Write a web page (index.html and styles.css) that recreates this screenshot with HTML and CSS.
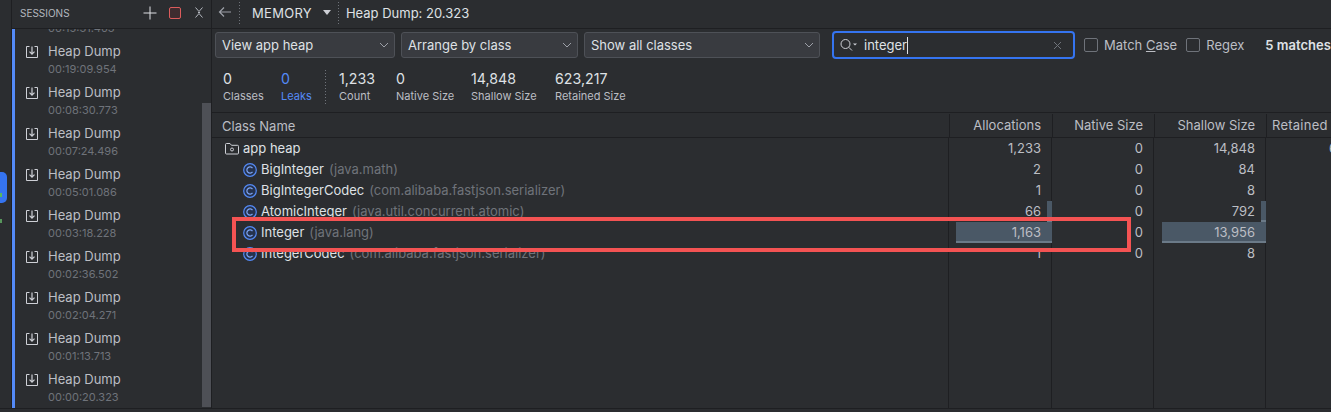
FILE: index.html
```html
<!DOCTYPE html>
<html lang="en">
<head>
<meta charset="utf-8">
<title>Memory profiler</title>
<link rel="stylesheet" href="styles.css">
</head>
<body>
<div class="app">
  <div class="rail"><div class="rail-btn"><span class="rail-dot"></span></div><span class="rail-dot2"></span></div>
  <aside class="sessions">
    <div class="s-head">
      <span class="s-title">SESSIONS</span>
      <svg class="s-ic s-plus" width="14" height="14" viewBox="0 0 14 14"><path d="M7 0.500v13M.5 7h13" stroke="#dfe1e5" fill="none"/></svg>
      <svg class="s-ic s-stop" width="14" height="14" viewBox="0 0 14 14"><rect x="1.500" y="1.500" width="11" height="11" rx="1.500" fill="#3e2c2f" stroke="#db5c5c"/></svg>
      <svg class="s-ic s-close" width="8" height="11" viewBox="0 0 8 11"><path d="M.5.500L4 4.500 7.500.500M.5 10.500L4 6.500l3.500 4M3 5.500h2" stroke="#b4b8bf" fill="none"/></svg>
    </div>
    <div class="s-body">
      <div class="s-list">
        <div class="s-item partial"><div class="s-time">00:15:31.403</div></div>
        <div class="s-item"><svg class="dl" width="12" height="12" viewBox="0 0 12 12"><use href="#dl"/></svg><div><div class="s-name">Heap Dump</div><div class="s-time">00:19:09.954</div></div></div>
        <div class="s-item"><svg class="dl" width="12" height="12" viewBox="0 0 12 12"><use href="#dl"/></svg><div><div class="s-name">Heap Dump</div><div class="s-time">00:08:30.773</div></div></div>
        <div class="s-item"><svg class="dl" width="12" height="12" viewBox="0 0 12 12"><use href="#dl"/></svg><div><div class="s-name">Heap Dump</div><div class="s-time">00:07:24.496</div></div></div>
        <div class="s-item"><svg class="dl" width="12" height="12" viewBox="0 0 12 12"><use href="#dl"/></svg><div><div class="s-name">Heap Dump</div><div class="s-time">00:05:01.086</div></div></div>
        <div class="s-item"><svg class="dl" width="12" height="12" viewBox="0 0 12 12"><use href="#dl"/></svg><div><div class="s-name">Heap Dump</div><div class="s-time">00:03:18.228</div></div></div>
        <div class="s-item"><svg class="dl" width="12" height="12" viewBox="0 0 12 12"><use href="#dl"/></svg><div><div class="s-name">Heap Dump</div><div class="s-time">00:02:36.502</div></div></div>
        <div class="s-item"><svg class="dl" width="12" height="12" viewBox="0 0 12 12"><use href="#dl"/></svg><div><div class="s-name">Heap Dump</div><div class="s-time">00:02:04.271</div></div></div>
        <div class="s-item"><svg class="dl" width="12" height="12" viewBox="0 0 12 12"><use href="#dl"/></svg><div><div class="s-name">Heap Dump</div><div class="s-time">00:01:13.713</div></div></div>
        <div class="s-item"><svg class="dl" width="12" height="12" viewBox="0 0 12 12"><use href="#dl"/></svg><div><div class="s-name">Heap Dump</div><div class="s-time">00:00:20.323</div></div></div>
      </div>
      <div class="s-scroll"><div class="s-thumb"></div></div>
    </div>
  </aside>
  <main class="main">
    <div class="topbar">
      <svg class="back" width="14" height="12" viewBox="0 0 14 12"><path d="M13 6H1.500M6 1.500L1.500 6 6 10.500" stroke="#9da0a8" fill="none" stroke-width="1.200"/></svg>
      <span class="vdots"></span>
      <span class="mem">MEMORY</span>
      <span class="tri"></span>
      <span class="vdots"></span>
      <span class="dump">Heap Dump: 20.323</span>
    </div>
    <div class="filters">
      <div class="combo c1"><span>View app heap</span><svg width="10" height="6" viewBox="0 0 10 6"><path d="M1 1l4 4 4-4" stroke="#9da0a8" fill="none"/></svg></div>
      <div class="combo c2"><span>Arrange by class</span><svg width="10" height="6" viewBox="0 0 10 6"><path d="M1 1l4 4 4-4" stroke="#9da0a8" fill="none"/></svg></div>
      <div class="combo c3"><span>Show all classes</span><svg width="10" height="6" viewBox="0 0 10 6"><path d="M1 1l4 4 4-4" stroke="#9da0a8" fill="none"/></svg></div>
      <div class="search">
        <svg class="mag" width="18" height="14" viewBox="0 0 18 14"><circle cx="5.500" cy="6" r="4.500" stroke="#ced0d6" fill="none"/><path d="M8.800 9.300L12 12.500" stroke="#ced0d6" fill="none"/><path d="M13 5.500h4l-2 2z" fill="#ced0d6"/></svg>
        <span class="q">integer</span><span class="caret"></span>
        <svg class="clr" width="9" height="9" viewBox="0 0 9 9"><path d="M1 1l7 7M8 1L1 8" stroke="#6f737a" fill="none"/></svg>
      </div>
      <label class="chk"><span class="box"></span><span>Match <u>C</u>ase</span></label>
      <label class="chk"><span class="box"></span><span>Re<u>g</u>ex</span></label>
      <span class="matches">5 matches</span>
    </div>
    <div class="stats">
      <div class="stat st-c"><b>0</b><span>Classes</span></div>
      <div class="stat st-l"><b>0</b><span>Leaks</span></div>
      <span class="vdots short"></span>
      <div class="stat st-n"><b>1,233</b><span>Count</span></div>
      <div class="stat st-ns"><b>0</b><span>Native Size</span></div>
      <div class="stat st-s"><b>14,848</b><span>Shallow Size</span></div>
      <div class="stat st-r"><b>623,217</b><span>Retained Size</span></div>
    </div>
    <div class="table">
      <div class="row head">
        <div class="cell name">Class Name</div><div class="cell num">Allocations</div><div class="cell num">Native Size</div><div class="cell num">Shallow Size</div><div class="cell num ret">Retained Size</div>
      </div>
      <div class="tbody">
        <div class="row">
          <div class="cell name root"><svg width="14" height="12" viewBox="0 0 14 12"><path d="M.5 10V1.500a1 1 0 0 1 1-1h3.500l1.500 1.800h6a1 1 0 0 1 1 1V10a1 1 0 0 1-1 1h-11a1 1 0 0 1-1-1z" stroke="#ced0d6" fill="none"/><circle cx="7" cy="6.500" r="1.500" stroke="#ced0d6" fill="none"/></svg><span class="cn">app heap</span></div>
          <div class="cell num">1,233</div><div class="cell num">0</div><div class="cell num">14,848</div><div class="cell num ret">623,217</div>
        </div>
        <div class="row">
          <div class="cell name"><svg class="cls" width="14" height="14" viewBox="0 0 14 14"><use href="#cls"/></svg><span class="cn">BigInteger</span><span class="pk">(java.math)</span></div>
          <div class="cell num">2</div><div class="cell num">0</div><div class="cell num">84</div><div class="cell num ret"></div>
        </div>
        <div class="row">
          <div class="cell name"><svg class="cls" width="14" height="14" viewBox="0 0 14 14"><use href="#cls"/></svg><span class="cn">BigIntegerCodec</span><span class="pk">(com.alibaba.fastjson.serializer)</span></div>
          <div class="cell num">1</div><div class="cell num">0</div><div class="cell num">8</div><div class="cell num ret"></div>
        </div>
        <div class="row">
          <div class="cell name"><svg class="cls" width="14" height="14" viewBox="0 0 14 14"><use href="#cls"/></svg><span class="cn">AtomicInteger</span><span class="pk">(java.util.concurrent.atomic)</span></div>
          <div class="cell num bar"><i class="fill" style="width:4.800%"></i><span>66</span></div><div class="cell num">0</div><div class="cell num bar"><i class="fill" style="width:4.500%"></i><span>792</span></div><div class="cell num ret"></div>
        </div>
        <div class="row">
          <div class="cell name"><svg class="cls" width="14" height="14" viewBox="0 0 14 14"><use href="#cls"/></svg><span class="cn">Integer</span><span class="pk">(java.lang)</span></div>
          <div class="cell num bar"><i class="fill" style="width:92.300%"></i><span>1,163</span></div><div class="cell num">0</div><div class="cell num bar"><i class="fill" style="width:92.900%"></i><span>13,956</span></div><div class="cell num ret"></div>
        </div>
        <div class="row">
          <div class="cell name"><svg class="cls" width="14" height="14" viewBox="0 0 14 14"><use href="#cls"/></svg><span class="cn">IntegerCodec</span><span class="pk">(com.alibaba.fastjson.serializer)</span></div>
          <div class="cell num">1</div><div class="cell num">0</div><div class="cell num">8</div><div class="cell num ret"></div>
        </div>
        <div class="redbox"></div>
      </div>
    </div>
  </main>
</div>
<svg class="defs" width="0" height="0">
  <defs>
    <g id="dl"><path d="M3.500.500H.5v11h11V.500H8.500" stroke="#ced0d6" fill="none"/><path d="M6 .5v7.500M3.500 5.700L6 8.200l2.500-2.500" stroke="#ced0d6" fill="none" stroke-width="1.200"/></g>
    <g id="cls"><circle cx="7" cy="7" r="6.300" stroke="#548af7" fill="#25324d" stroke-width="1.200"/><path d="M9.500 5.200A3.100 3.100 0 1 0 9.500 8.800" stroke="#7fa6f5" fill="none" stroke-width="1.200"/></g>
  </defs>
</svg>
</body>
</html>
```
FILE: styles.css
```css
* { box-sizing: border-box; }
html, body { margin: 0; padding: 0; height: 100%; overflow: hidden; }
body { background: #2b2d30; color: #dfe1e5; font: 13px/16px Inter, "Noto Sans", sans-serif; }
.app { display: flex; width: 1331px; height: 409px; border-bottom: 1px solid #1e1f22; }
.rail { width: 12px; flex: none; background: #2b2d30; border-right: 1px solid #1e1f22; padding-top: 172px; }
.rail-btn { width: 7px; height: 31px; background: #3574f0; border-radius: 0 5px 5px 0; position: relative; }
.rail-dot { position: absolute; left: 0; bottom: 6px; width: 2px; height: 4px; background: #57b85c; }
.rail-dot2 { display: block; width: 2px; height: 4px; margin-top: 16px; background: #57965c; }
.sessions { width: 200px; flex: none; border-right: 1px solid #1e1f22; display: flex; flex-direction: column; }
.s-head { height: 29px; flex: none; display: flex; align-items: center; padding-left: 8px; border-bottom: 1px solid #1e1f22; }
.s-title { font-size: 10px; color: #b4b8bf; flex: 1; margin-bottom: 2px; }
.s-ic { flex: none; margin-bottom: 3px; }
.s-plus { margin-right: 11px; }
.s-stop { margin-right: 13px; }
.s-close { margin-right: 8px; }
.s-body { flex: 1; display: flex; min-height: 0; }
.s-list { width: 190px; flex: none; border-left: 3px solid #548af7; display: flex; flex-direction: column; justify-content: flex-end; overflow: hidden; padding-bottom: 2px; }
.s-item { height: 41px; flex: none; display: flex; padding: 5px 0 0 11px; gap: 10px; }
.s-item.partial { padding-left: 33px; padding-top: 23px; }
.dl { margin-top: 4px; flex: none; }
.s-name { color: #bcbec4; font-size: 13px; line-height: 18px; }
.s-time { color: #6f737a; font-size: 11px; line-height: 18px; }
.s-scroll { width: 9px; flex: none; display: flex; flex-direction: column; justify-content: flex-end; }
.s-thumb { height: 304px; background: #4e5056; margin-bottom: 1px; }
.main { flex: 1; min-width: 0; display: flex; flex-direction: column; overflow: hidden; }
.topbar { height: 29px; flex: none; display: flex; align-items: center; border-bottom: 1px solid #1e1f22; padding-bottom: 3px; }
.back { margin-left: 6px; flex: none; margin-bottom: 1px; }
.vdots { display: block; width: 1px; height: 22px; flex: none; background: repeating-linear-gradient(to bottom, #6f737a 0 1px, transparent 1px 3px); }
.topbar .vdots:nth-of-type(1) { margin-left: 7px; }
.mem { margin-left: 12px; color: #dfe1e5; letter-spacing: .3px; }
.tri { margin: 0 7px 0 11px; width: 0; height: 0; border: 4px solid transparent; border-top: 5px solid #ced0d6; border-bottom: 0; }
.dump { margin-left: 7px; color: #dfe1e5; }
.filters { height: 32px; flex: none; display: flex; align-items: center; padding-left: 3px; }
.combo { height: 26px; flex: none; display: flex; align-items: center; justify-content: space-between; padding: 0 5px 0 6px; background: #393b40; border: 1px solid #4e5157; border-radius: 3px; color: #dfe1e5; }
.c1 { width: 180px; margin-right: 6px; }
.c2 { width: 177px; margin-right: 6px; }
.c3 { width: 236px; margin-right: 12px; }
.search { width: 243px; height: 28px; flex: none; display: flex; align-items: center; border: 2px solid #3574f0; border-radius: 4px; padding-left: 6px; margin-right: 9px; }
.mag { flex: none; margin-right: 6px; }
.q { color: #dfe1e5; }
.caret { width: 1px; height: 17px; background: #dfe1e5; }
.clr { margin-left: auto; margin-right: 11px; }
.chk { display: flex; align-items: center; gap: 6px; margin-right: 9px; color: #bcbec4; }
.chk + .chk { margin-right: 9px; }
.box { width: 14px; height: 14px; border: 1px solid #6f737a; border-radius: 2px; }
.matches { margin-left: 12px; font-weight: 600; color: #dfe1e5; white-space: nowrap; }
.stats { height: 52px; flex: none; display: flex; padding: 9px 0 0 11px; border-bottom: 1px solid #1e1f22; }
.stat { display: flex; flex-direction: column; }
.stat b { font-weight: 400; font-size: 14.200px; line-height: 18px; color: #dfe1e5; }
.stat span { font-size: 11px; line-height: 16px; color: #bcbec4; white-space: nowrap; }
.st-c { width: 58px; }
.st-l { width: 44px; }
.st-l b, .st-l span { color: #548af7; }
.vdots.short { height: 34px; margin-right: 13px; }
.st-n { width: 57px; }
.st-ns { width: 75px; }
.st-s { width: 84px; }
.table { flex: 1; min-height: 0; display: flex; flex-direction: column; }
.row { display: grid; grid-template-columns: 737px 104px 102px 112px 122px; height: 21px; }
.row.head { grid-template-columns: 738px 103px 102px 112px 122px; height: 25px; flex: none; border-bottom: 1px solid #1e1f22; }
.head .cell { line-height: 22px; color: #bcbec4; border-right: 1px solid #1e1f22; height: 23px; margin-top: 1px; padding-right: 11px; }
.head .name { padding-left: 10px; }
.head .ret { border-right: 0; text-align: left; padding: 0 0 0 5px; letter-spacing: .25px; }
.tbody { flex: 1; position: relative; background-image: linear-gradient(#1e1f22, #1e1f22), linear-gradient(#1e1f22, #1e1f22), linear-gradient(#1e1f22, #1e1f22), linear-gradient(#1e1f22, #1e1f22); background-size: 1px 100%; background-repeat: no-repeat; background-position: 736px 0, 839px 0, 941px 0, 1053px 0; }
.cell { height: 21px; line-height: 21px; overflow: hidden; position: relative; }
.name { padding-left: 31px; display: flex; align-items: center; white-space: nowrap; }
.root { padding-left: 13px; }
.root svg { margin-right: 4px; flex: none; }
.cls { margin-right: 4px; flex: none; }
.cn { color: #dfe1e5; }
.pk { color: #6f737a; margin-left: 5px; }
.num { text-align: right; padding-right: 12px; color: #bcbec4; white-space: nowrap; }
.bar span { position: relative; }
.fill { position: absolute; right: 1px; top: 0; bottom: 0; background: #4a5866; border-bottom: 2px solid #6b7a88; }
.redbox { position: absolute; left: 20px; top: 79px; width: 899px; height: 35px; border: 4px solid #f45353; }
.defs { position: absolute; }
```
